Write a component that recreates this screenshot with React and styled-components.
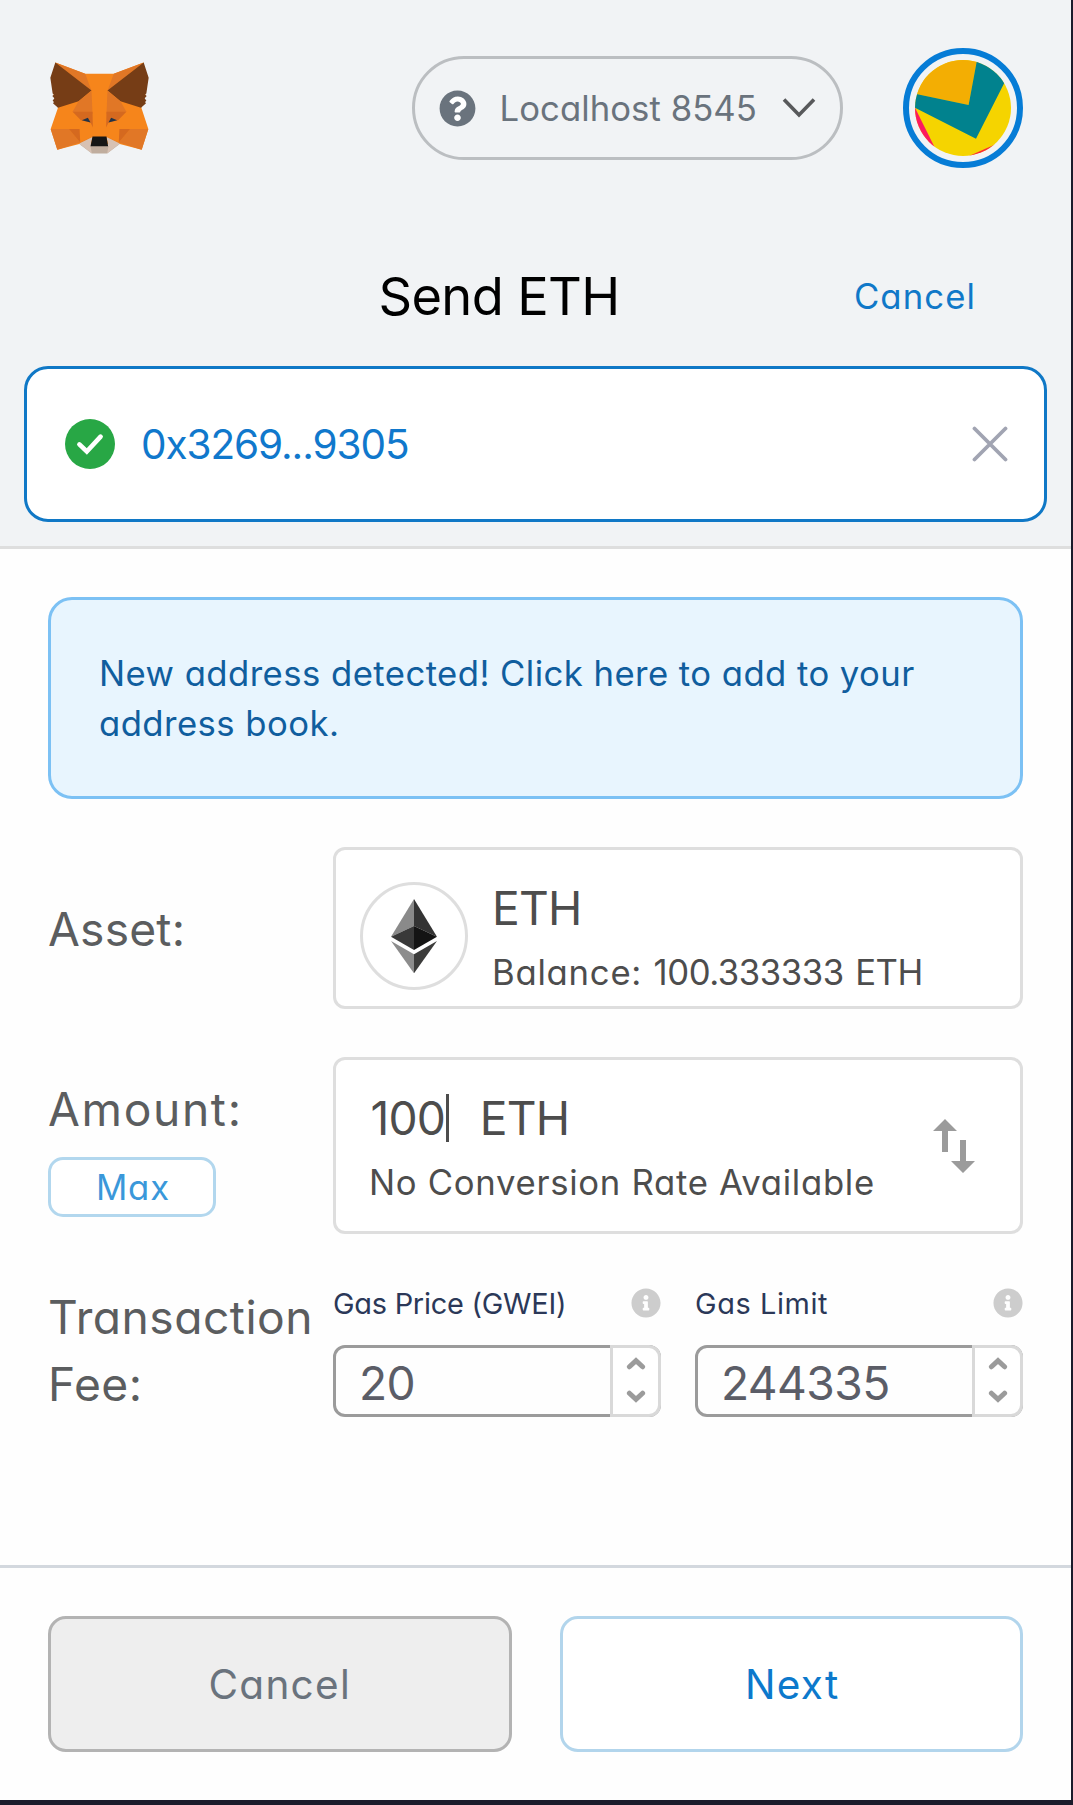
import React from 'react';
import styled, { createGlobalStyle } from 'styled-components';
import { FaInfoCircle, FaQuestionCircle } from 'react-icons/fa';

const GlobalStyle = createGlobalStyle`
  * { box-sizing: border-box; }
  body {
    margin: 0;
    background: #1b1b2b;
    font-family: Inter, "Liberation Sans", sans-serif;
    font-feature-settings: "cv11" 1;
  }
  svg { display: block; flex: none; }
  button, input { font: inherit; font-feature-settings: inherit; }
`;

const Popup = styled.main`
  width: 1071px;
  height: 1800px;
  margin-bottom: 5px;
  display: flex;
  flex-direction: column;
  background: #fefefe;
`;

const Header = styled.header`
  background: #f1f3f5;
  border-bottom: 3px solid #dedede;
  padding-bottom: 24px;
`;

const TopBar = styled.div`
  height: 216px;
  padding: 0 48px 0 50px;
  display: flex;
  align-items: center;
`;

const NetworkPill = styled.div`
  width: 431px;
  height: 104px;
  margin-left: auto;
  padding-left: 23.5px;
  display: flex;
  align-items: center;
  border: 3px solid #bbbec1;
  border-radius: 52px;
`;

const QuestionBadge = styled.span`
  display: flex;
  color: #6a737d;
  border-radius: 50%;
  background: radial-gradient(circle, #fff 60%, transparent 62%);
`;

const NetworkName = styled.span`
  width: 282px;
  margin-left: 24px;
  font-size: 34.7px;
  letter-spacing: 0.06px;
  color: #6a737d;
  white-space: nowrap;
`;

const Avatar = styled.div`
  width: 120px;
  height: 120px;
  margin-left: 60px;
  padding: 6px;
  border: 6px solid #067cd6;
  border-radius: 50%;

  svg { border-radius: 50%; }
`;

const TitleRow = styled.div`
  height: 150px;
  padding: 50px 95px 0 378.5px;
  display: flex;
  justify-content: space-between;
  line-height: 60px;
`;

const Title = styled.h1`
  margin: 0;
  font-size: 52.4px;
  font-weight: 400;
  letter-spacing: -0.65px;
  color: #000;
`;

const HeaderLink = styled.a`
  font-size: 34.7px;
  letter-spacing: 1.1px;
  color: #1078c8;
`;

const RecipientField = styled.div`
  height: 156px;
  margin: 0 24px;
  padding: 0 36px 0 38px;
  display: flex;
  align-items: center;
  justify-content: space-between;
  background: #fff;
  border: 3px solid #1078c6;
  border-radius: 24px;
`;

const Recipient = styled.div`
  display: flex;
  align-items: center;
  gap: 26px;
  font-size: 40.5px;
  letter-spacing: -1.09px;
  color: #1078cc;
`;

const Content = styled.section`
  padding: 48px 48px 0;
  display: flex;
  flex-direction: column;
  gap: 48px;
`;

const Notice = styled.div`
  height: 202px;
  padding: 48px 46px 48px 48px;
  background: #e8f5fe;
  border: 3px solid #7cc1f4;
  border-radius: 24px;
  font-size: 34.7px;
  line-height: 50px;
  letter-spacing: 0.44px;
  color: #105e9e;
`;

const FormRow = styled.div`
  height: ${(p) => p.$height}px;
  display: grid;
  grid-template-columns: 285px 1fr;
`;

const LabelCell = styled.div`
  padding-top: ${(p) => p.$top}px;
`;

const Label = styled.div`
  font-size: 46.2px;
  line-height: 67px;
  letter-spacing: ${(p) => p.$spacing}px;
  color: #5b5d5f;
`;

const MaxButton = styled.button`
  width: 168px;
  height: 60px;
  margin-top: 13.5px;
  padding: 0 0 0 2px;
  background: #fff;
  border: 3px solid #b2d7ee;
  border-radius: 15px;
  font-size: 34.7px;
  letter-spacing: 0.9px;
  color: #3a98da;
`;

const FieldBox = styled.div`
  display: flex;
  padding: 0 45px 0 ${(p) => p.$left}px;
  background: #fff;
  border: 3px solid #dedede;
  border-radius: 12px;
`;

const TokenIcon = styled.div`
  width: 108px;
  height: 108px;
  margin: 32px 24px 0 0;
  display: flex;
  align-items: center;
  justify-content: center;
  border: 3px solid #dedede;
  border-radius: 50%;
`;

const FieldText = styled.div`
  flex: 1;
  padding-top: 28px;
  display: flex;
  flex-direction: column;
  gap: 8.5px;
  color: #4d4d4d;
`;

const Primary = styled.div`
  padding-left: ${(p) => p.$inset || 0}px;
  display: flex;
  align-items: center;
  font-size: 46.2px;
  line-height: 60px;
  letter-spacing: -0.8px;
`;

const Secondary = styled.div`
  display: flex;
  gap: 11.5px;
  font-size: 34.7px;
  line-height: 50px;
  letter-spacing: ${(p) => p.$spacing}px;
  white-space: nowrap;
`;

const Figure = styled.span`
  letter-spacing: -0.45px;
`;

const Caret = styled.span`
  width: 3px;
  height: 48px;
  margin: 0 31px 0 0.5px;
  background: #4d4d4d;
`;

const SwapButton = styled.div`
  display: flex;
  align-items: center;
`;

const GasFields = styled.div`
  display: grid;
  grid-template-columns: 1fr 1fr;
  gap: 34px;
`;

const GasHeader = styled.div`
  height: 42px;
  margin-bottom: 21px;
  display: flex;
  align-items: center;
  justify-content: space-between;
  font-size: 28.9px;
  line-height: 44px;
  letter-spacing: ${(p) => p.$spacing}px;
  color: #2b3858;

  svg { color: #cdcdcd; }
`;

const GasTitle = styled.span`
  padding-top: 2px;
`;

const GasInput = styled.div`
  height: 72px;
  padding-left: 23px;
  display: flex;
  justify-content: space-between;
  border: 3px solid #9b9b9b;
  border-radius: 12px;
  font-size: 46.2px;
  line-height: 70px;
  letter-spacing: -0.6px;
  color: #5b5d67;
`;

const Stepper = styled.div`
  width: 51px;
  margin: -3px;
  padding-bottom: 3px;
  display: flex;
  flex-direction: column;
  align-items: center;
  justify-content: center;
  gap: 20px;
  background: #fff;
  border: 3px solid #d9d9d9;
  border-radius: 0 12px 12px 0;
`;

const Footer = styled.footer`
  margin-top: auto;
  padding: 48px;
  display: grid;
  grid-template-columns: 1fr 1fr;
  gap: 48px;
  border-top: 3px solid #d3d8de;
`;

const FooterButton = styled.button`
  height: 136px;
  padding: 0 0 0 ${(p) => (p.$muted ? 0 : 2)}px;
  background: ${(p) => (p.$muted ? '#eeeeee' : '#fff')};
  border: 3px solid ${(p) => (p.$muted ? '#b3b3b3' : '#b2d5ec')};
  border-radius: 18px;
  font-size: 40.5px;
  letter-spacing: 1.3px;
  color: ${(p) => (p.$muted ? '#6a737d' : '#0c79cc')};
`;

const FoxHalf = () => (
  <>
    <polygon fill="#e17726" points="78,67 168,101 187,152" />
    <polygon fill="#763d16" points="78,67 63,113 70,160 74,163 69,168 75,175 70,182 74,186 71,190 86,203 148,184 187,151" />
    <polygon fill="#e17726" points="187,151 148,184 130,215 190,222" />
    <polygon fill="#d5691f" points="130,215 190,215 191,263 184,248 155,241" />
    <polygon fill="#e17726" points="64,267 119,267 153,308 84,330" />
    <polygon fill="#d5691f" points="119,267 151,267 153,308" />
    <polygon fill="#e17726" points="153,308 190,290 150,312" />
    <polygon fill="#d7c1b3" points="150,311 190,291 184,319 188,341" />
    <polygon fill="#233447" points="158,241 176,233 184,248" />
  </>
);

const FoxLogo = () => (
  <svg width="99" height="92" viewBox="62 66 298 276">
    <polygon
      fill="#f6851b"
      points="78,67 168,101 254,101 344,67 350,160 337,203 358,267 338,330 272,312 150,312 84,330 64,267 86,203 72,160"
    />
    <polygon fill="#c0ad9e" points="150,312 184,318 238,318 272,312 234,341 188,341" />
    <FoxHalf />
    <g transform="translate(422 0) scale(-1 1)">
      <FoxHalf />
    </g>
    <polygon fill="#161616" points="190,290 232,290 237,319 184,319" />
  </svg>
);

const Identicon = () => (
  <svg width="96" height="96" viewBox="0 0 96 96">
    <rect width="96" height="96" fill="#f5d400" />
    <polygon fill="#f3ae03" points="0,0 62,0 53.6,45 0,33.7" />
    <polygon fill="#01828e" points="62,0 101,0 61,78.7 0,47.7 0,33.7 53.6,45" />
    <polygon fill="#fc1960" points="0,47.7 20,88 0,96" />
    <polygon fill="#fb2638" points="80,84.5 54,96 96,96" />
  </svg>
);

const EthDiamond = () => (
  <svg width="46" height="74.3" viewBox="213 207 138 223">
    <polygon fill="#8a8a8a" points="282,207 213,320 282,288" />
    <polygon fill="#343434" points="282,207 351,320 282,288" />
    <polygon fill="#393939" points="213,320 282,288 282,360" />
    <polygon fill="#141414" points="351,320 282,288 282,360" />
    <polygon fill="#8c8c8c" points="213,333 282,373 282,430" />
    <polygon fill="#3c3c3b" points="351,333 282,373 282,430" />
  </svg>
);

const Arrow = ({ down }) => (
  <svg width="20" height="13" viewBox="0 0 20 13" fill="none" stroke="#9b9b9b" strokeWidth="5" strokeLinecap="round">
    <path d={down ? 'M3.4 3.2 10 9.4 16.6 3.2' : 'M3.4 9.8 10 3.6 16.6 9.8'} />
  </svg>
);

const GasField = ({ title, value, spacing }) => (
  <div>
    <GasHeader $spacing={spacing}>
      <GasTitle>{title}</GasTitle>
      <FaInfoCircle size={30} />
    </GasHeader>
    <GasInput>
      {value}
      <Stepper>
        <Arrow />
        <Arrow down />
      </Stepper>
    </GasInput>
  </div>
);

export default function App() {
  return (
    <>
      <GlobalStyle />
      <Popup>
        <Header>
          <TopBar>
            <FoxLogo />
            <NetworkPill>
              <QuestionBadge>
                <FaQuestionCircle size={37} />
              </QuestionBadge>
              <NetworkName>Localhost 8545</NetworkName>
              <svg width="34" height="20" viewBox="0 0 34 20" fill="none" stroke="#58595b" strokeWidth="3.6">
                <path d="M2 1.5 17 17 32 1.5" />
              </svg>
            </NetworkPill>
            <Avatar>
              <Identicon />
            </Avatar>
          </TopBar>
          <TitleRow>
            <Title>Send ETH</Title>
            <HeaderLink>Cancel</HeaderLink>
          </TitleRow>
          <RecipientField>
            <Recipient>
              <svg width="50" height="50" viewBox="0 0 50 50">
                <circle cx="25" cy="25" r="25" fill="#28a745" />
                <path d="M14.4 25.4 21.8 32.5 35.6 17.6" fill="none" stroke="#fff" strokeWidth="4.6" strokeLinecap="round" />
              </svg>
              0x3269...9305
            </Recipient>
            <svg width="36" height="36" viewBox="0 0 36 36" stroke="#a1a4b2" strokeWidth="3.8" strokeLinecap="round">
              <path d="M2.5 2.5 33.5 33.5M33.5 2.5 2.5 33.5" />
            </svg>
          </RecipientField>
        </Header>

        <Content>
          <Notice>New address detected! Click here to add to your address book.</Notice>

          <FormRow $height={162}>
            <LabelCell $top={49}>
              <Label $spacing={0.2}>Asset:</Label>
            </LabelCell>
            <FieldBox $left={24}>
              <TokenIcon>
                <EthDiamond />
              </TokenIcon>
              <FieldText>
                <Primary>ETH</Primary>
                <Secondary $spacing={0.75}>
                  <span>Balance:</span>
                  <Figure>100.333333</Figure>
                  <Figure>ETH</Figure>
                </Secondary>
              </FieldText>
            </FieldBox>
          </FormRow>

          <FormRow $height={177}>
            <LabelCell $top={19}>
              <Label $spacing={1.65}>Amount:</Label>
              <MaxButton>Max</MaxButton>
            </LabelCell>
            <FieldBox $left={33}>
              <FieldText>
                <Primary $inset={1.5}>
                  100
                  <Caret />
                  ETH
                </Primary>
                <Secondary $spacing={0.7}>No Conversion Rate Available</Secondary>
              </FieldText>
              <SwapButton>
                <svg width="42" height="54" viewBox="0 0 42 54" fill="#9b9b9b">
                  <path d="M12 0 24 12H15V33H9V12H0Z" />
                  <path d="M30 54 18 42H27V21H33V42H42Z" />
                </svg>
              </SwapButton>
            </FieldBox>
          </FormRow>

          <FormRow $height={135}>
            <LabelCell $top={2.4}>
              <Label $spacing={0.48}>
                Transaction
                <br />
                Fee:
              </Label>
            </LabelCell>
            <GasFields>
              <GasField title="Gas Price (GWEI)" value="20" spacing={-0.24} />
              <GasField title="Gas Limit" value="244335" spacing={0.6} />
            </GasFields>
          </FormRow>
        </Content>

        <Footer>
          <FooterButton $muted>Cancel</FooterButton>
          <FooterButton>Next</FooterButton>
        </Footer>
      </Popup>
    </>
  );
}
